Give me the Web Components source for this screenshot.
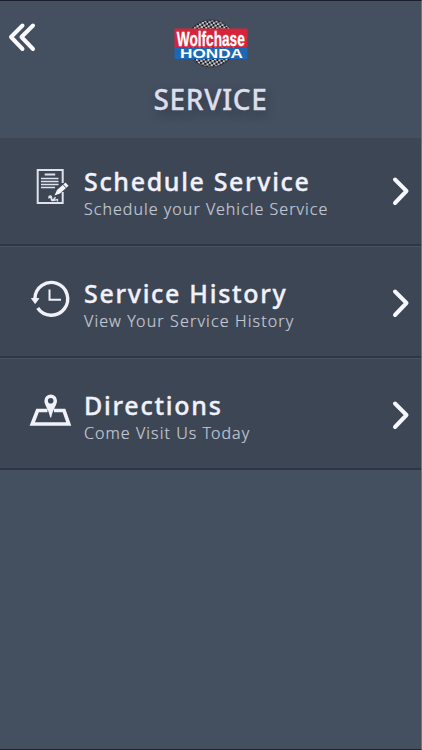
<!DOCTYPE html>
<html lang="en">
<head>
<meta charset="utf-8">
<title>Service</title>
<style>
  body {
    margin: 0;
    background: #444f5f;
    font-family: "Noto Sans", "Open Sans", sans-serif;
  }
</style>
</head>
<body>
<service-screen>
  <page-header slot="header">SERVICE</page-header>
  <menu-row icon="schedule" class="first" style="--title-gap: 1.65px; --sub-gap: 1.03px">
    Schedule Service
    <span slot="detail">Schedule your Vehicle Service</span>
  </menu-row>
  <menu-row icon="history" style="--title-gap: 1.7px; --sub-gap: 1.14px">
    Service History
    <span slot="detail">View Your Service History</span>
  </menu-row>
  <menu-row icon="map" style="--title-gap: 1.75px; --sub-gap: 1.05px">
    Directions
    <span slot="detail">Come Visit Us Today</span>
  </menu-row>
</service-screen>

<script>
const icons = {
  schedule: `
    <svg width="44" height="44" viewBox="0 0 44 44" fill="none" stroke="#dfe1ec">
      <path d="M34.700 26v11H9.700V4H34.700V17" stroke-width="2"/>
      <path d="M16.700 8.500h10.500" stroke-width="2"/>
      <path d="M13 12.500h17.500M13 15.500h17.500M13 18.500h17.500M13 21.500h14" stroke-width="1.500"/>
      <path d="M26.500 29.500l2.500-5.500 8.500-7.500 3 3.300-8.500 7.700z" fill="#f5f5fb" stroke="none"/>
      <path d="M34.800 18.300l3.200 3.500" stroke="#3d4655"/>
      <path d="M21 32.500c-1-4 3.500-3 2.500 0s2.500 2 3-1M21.500 30.500l3.500 4M27.500 31l-2 3.500 4-1v2" stroke-width="1.300"/>
    </svg>`,
  history: `
    <svg width="44" height="44" viewBox="0 0 44 44" fill="none" stroke="#f1f1f9">
      <path d="M6.900 20.500A16.400 16.400 0 1 1 9.700 30" stroke-width="3.400"/>
      <path d="M3.500 20.500h7.300L7.200 25.500z" fill="#f1f1f9" stroke-width="1"/>
      <path d="M21.500 11.500V21.800H33" stroke-width="2"/>
    </svg>`,
  map: `
    <svg width="44" height="44" viewBox="0 0 44 44" fill="none" stroke="#f1f1f9">
      <path d="M19.500 20.500H9.500L4.300 34H40.700L36 20.500H26" stroke-width="3.700"/>
      <path fill-rule="evenodd" d="M22.700 4.500a6.300 6.300 0 0 0-6.300 6.300c0 4.500 4 8 5.800 16.700h1c1.800-8.700 5.800-12.200 5.800-16.700a6.300 6.300 0 0 0-6.300-6.300zm0 3.500a2.800 2.800 0 1 1 0 5.600 2.800 2.800 0 0 1 0-5.600z" fill="#f1f1f9" stroke="none"/>
    </svg>`
};

customElements.define("service-screen", class extends HTMLElement {
  constructor() {
    super();
    this.attachShadow({ mode: "open" }).innerHTML = `
      <style>
        :host {
          display: flex;
          flex-direction: column;
          box-sizing: border-box;
          height: 750px;
          border-top: 1px solid #1d1d2c;
          border-right: 1px solid #6c7785;
          border-bottom: 1px solid #20222f;
          background: #444f5f;
          overflow: hidden;
        }
      </style>
      <slot name="header"></slot>
      <slot></slot>
    `;
  }
});

customElements.define("dealer-logo", class extends HTMLElement {
  constructor() {
    super();
    this.attachShadow({ mode: "open" }).innerHTML = `
      <style>
        :host { display: block; height: 48px; }
        svg { display: block; overflow: visible; }
      </style>
      <svg width="76" height="48" viewBox="0 0 76 48">
        <defs>
          <pattern id="check" width="4.400" height="4.400" patternUnits="userSpaceOnUse" patternTransform="rotate(12)">
            <path fill="#c9cacf" d="M0 0h4.400v4.400H0z"/>
            <path fill="#15161b" d="M0 0h2.200v2.200H0zM2.200 2.200h2.200v2.200H2.200z"/>
          </pattern>
        </defs>
        <ellipse cx="38" cy="23.500" rx="25" ry="23.500" fill="url(#check)" stroke="#262b34" stroke-width=".7"/>
        <path fill="#d8243a" d="M1.500 8.500h73v19h-73z"/>
        <path fill="#1c68b4" d="M1.500 27.500h73v11.500h-73z"/>
        <text x="3.800" y="26" textLength="68" lengthAdjust="spacingAndGlyphs"
          font-family="Liberation Sans" font-weight="700" font-size="21"
          fill="#fff" stroke="#fff" stroke-width=".3">Wolfchase</text>
        <text x="7" y="37.500" textLength="63" lengthAdjust="spacingAndGlyphs"
          font-family="Liberation Sans" font-weight="700" font-size="12.500" fill="#fff">HONDA</text>
      </svg>
    `;
  }
});

customElements.define("page-header", class extends HTMLElement {
  constructor() {
    super();
    this.attachShadow({ mode: "open" }).innerHTML = `
      <style>
        :host {
          display: grid;
          grid-template-columns: 80px 1fr 80px;
          grid-template-rows: 59px 1fr;
          justify-items: center;
          box-sizing: border-box;
          height: 137px;
          padding-top: 19px;
        }
        .back { justify-self: start; margin-left: 7px; }
        h1 {
          grid-column: 1 / 4;
          margin: 0;
          color: #dddeea;
          font-size: 28px;
          font-weight: 500;
          line-height: 40px;
          letter-spacing: .7px;
          -webkit-text-stroke: .3px;
          text-shadow: 2px 4px 8px rgba(30, 35, 50, .5);
        }
      </style>
      <svg class="back" width="30" height="34" fill="none" stroke="#fafaff" stroke-width="4" stroke-linecap="round" stroke-linejoin="round">
        <path d="M15.500 5.500 4 17l11.500 12M26 5.500 14.500 17 26 29"/>
      </svg>
      <dealer-logo></dealer-logo>
      <h1><slot></slot></h1>
    `;
  }
});

customElements.define("menu-row", class extends HTMLElement {
  constructor() {
    super();
    this.attachShadow({ mode: "open" }).innerHTML = `
      <style>
        :host {
          display: flex;
          flex: none;
          align-items: flex-start;
          box-sizing: border-box;
          height: 112px;
          padding: 32px 10px 0 28px;
          background: #3d4655;
          border-bottom: 2px solid #2d3546;
          box-shadow: inset 0 1px #485364;
          white-space: nowrap;
        }
        :host(.first) { height: 108px; padding-top: 28px; box-shadow: none; }
        .icon { width: 44px; height: 44px; flex: none; }
        .text { flex: 1; margin-left: 12px; }
        .title {
          color: #f1f1fa;
          font-size: 25px;
          font-weight: 500;
          line-height: 30px;
          letter-spacing: var(--title-gap);
          -webkit-text-stroke: .35px;
        }
        .detail {
          margin-top: 1px;
          color: #c3c8d4;
          font-size: 16px;
          font-weight: 300;
          line-height: 24px;
          letter-spacing: var(--sub-gap);
          -webkit-text-stroke: .2px;
        }
        .arrow { margin-top: 9px; }
      </style>
      <div class="icon">${icons[this.getAttribute("icon")]}</div>
      <div class="text">
        <div class="title"><slot></slot></div>
        <div class="detail"><slot name="detail"></slot></div>
      </div>
      <svg class="arrow" width="20" height="32" fill="none" stroke="#f7f7ff" stroke-width="4" stroke-linecap="round" stroke-linejoin="round">
        <path d="M4 4.500 15.500 16 4 28"/>
      </svg>
    `;
  }
});
</script>
</body>
</html>
